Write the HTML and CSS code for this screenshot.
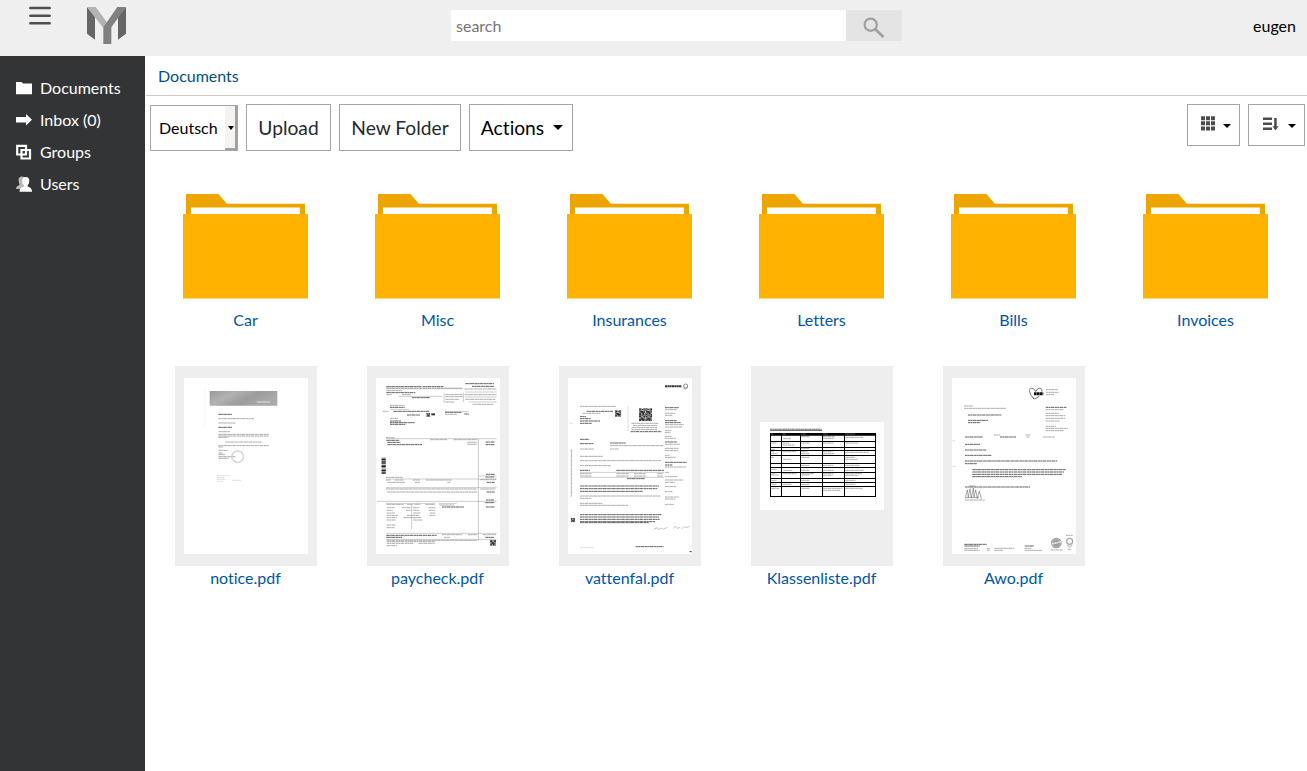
FILE: index.html
```
<!DOCTYPE html>
<html lang="en">
<head>
<meta charset="utf-8">
<title>Documents</title>
<link rel="stylesheet" href="styles.css">
</head>
<body>
<header class="topbar">
  <svg class="menu" width="22" height="20" viewBox="0 0 22 20"><path d="M1.300 2H20.700M1.300 9.700H20.700M1.300 17.300H20.700" stroke="#505050" stroke-width="2.500" stroke-linecap="round"/></svg>
  <svg class="logo" width="39" height="37" viewBox="201 21 117 111">
    <path fill="#666" d="M201 21V101L225 119V50zM318 21V101L294 119V50z"/>
    <path fill="#b3b3b3" d="M201 21H227L262 68L250 84z"/>
    <path fill="#808080" d="M292 21H318L274 82V132H250V82z"/>
  </svg>
  <form class="search">
    <input class="search-input" type="text" placeholder="search">
    <button class="search-btn" type="button"><svg width="22" height="22" viewBox="0 0 22 22" fill="none" stroke="#a0a0a0"><circle cx="7.700" cy="7.700" r="6.100" stroke-width="2.200"/><path d="M12.300 12.300L20.500 20" stroke-width="2.800"/></svg></button>
  </form>
  <span class="user">eugen</span>
</header>
<div class="body">
  <nav class="sidebar">
    <a class="nav-item"><svg class="nav-icon" viewBox="0 0 16 16"><path d="M0 2H5.500L7 3.500H16V14.300H0z"/></svg>Documents</a>
    <a class="nav-item"><svg class="nav-icon" viewBox="0 0 16 16"><path d="M0 5H10V2L16 7.700L10 13.500V10.600H0z"/></svg>Inbox (0)</a>
    <a class="nav-item"><svg class="nav-icon" viewBox="0 0 16 16"><path d="M1.200 1.800H10V10.500H1.200zM5.500 6H14V14.500H5.500z" fill="none" stroke="#fff" stroke-width="2.200"/></svg>Groups</a>
    <a class="nav-item"><svg class="nav-icon" viewBox="0 0 16 16"><path fill="#bbb" d="M2.500 4Q2.500.5 6 .5T9.500 4L8 9V13H0Q0 10 3.500 9Z"/><path d="M6.200 5Q6.200 1 9.800 1T13.300 5Q13.300 8 11.700 9V10.500Q16 11.500 16 15.700H3.500Q3.500 11.500 8 10.500V9Q6.200 8 6.200 5z"/></svg>Users</a>
  </nav>
  <main class="main">
    <div class="breadcrumb"><a>Documents</a></div>
    <div class="toolbar">
      <div class="select"><span class="select-text">Deutsch</span><span class="select-arrow"><i class="caret small"></i></span></div>
      <button class="btn upload">Upload</button>
      <button class="btn folder-btn">New Folder</button>
      <button class="btn actions">Actions<i class="caret"></i></button>
      <div class="views">
        <button class="btn view-grid"><svg width="14" height="15" viewBox="0 0 14 15"><path fill="#4d4d4d" d="M0 .3h4v4H0zM5 .3h4v4H5zM10 .3h4v4h-4zM0 5.300h4v4H0zM5 5.300h4v4H5zM10 5.300h4v4h-4zM0 10.500h4v4H0zM5 10.500h4v4H5zM10 10.500h4v4h-4z"/></svg><i class="caret mid"></i></button>
        <button class="btn view-sort"><svg width="16" height="14" viewBox="0 0 16 14"><path fill="#4d4d4d" d="M0 .4h9v2.500H0zM0 5.400h9v2.500H0zM0 10.600h9v2.500H0zM11.200 1h2.500v8.300H15.500L12.500 13.500L9.500 9.300h1.700z"/></svg><i class="caret mid"></i></button>
      </div>
    </div>
    <svg class="defs" width="0" height="0">
      <symbol id="folder" viewBox="0 0 125 105">
        <path fill="#eda500" d="M3 20V-.3H35L44 9.800H122V20z"/><path fill="#fff" d="M8 13.500H117V20H8z"/><path fill="#ffb300" d="M0 20H125V104.500H0z"/>
      </symbol>
      <symbol id="matrix" viewBox="0 0 12 12"><path fill="#bbb" d="M0 0h12v12H0z"/><path fill="#333" d="M0 0h4v4H0zM8 0h4v4H8zM0 8h4v4H0zM5 1h2v2H5zM5 5h3v2h3v2H9v3H6V9H4V7H1V5h3zM9 5h3v1H9zM10 10h2v2h-2z"/><path fill="#fff" d="M1.200 1.200h1v1h-1zM9.200 1.200h1v1h-1zM1.200 9.200h1v1h-1z"/></symbol>
      <linearGradient id="banner" x2="1" y2=".4"><stop stop-color="#999"/><stop offset=".35" stop-color="#b2b2b2"/><stop offset=".65" stop-color="#9c9c9c"/><stop offset="1" stop-color="#aaa"/></linearGradient>
    </svg>
    <section class="row">
      <a class="tile"><svg class="folder"><use href="#folder"/></svg><span>Car</span></a>
      <a class="tile"><svg class="folder"><use href="#folder"/></svg><span>Misc</span></a>
      <a class="tile"><svg class="folder"><use href="#folder"/></svg><span>Insurances</span></a>
      <a class="tile"><svg class="folder"><use href="#folder"/></svg><span>Letters</span></a>
      <a class="tile"><svg class="folder"><use href="#folder"/></svg><span>Bills</span></a>
      <a class="tile"><svg class="folder"><use href="#folder"/></svg><span>Invoices</span></a>
    </section>
    <section class="row files">
      <a class="tile"><div class="thumb"><svg class="page" viewBox="42 54 372 528">
        <path fill="url(#banner)" d="M119 93H322V137H119z"/><path class="ln" style="stroke:#eee" d="M262 126H300"/>
        <path class="ln" d="M145 163H186M145 202H186"/>
        <path class="ln soft" d="M145 176H252M145 189H196M145 215H180M145 223H297M145 228H297M145 232H175M166 246H277M145 257H297M145 261H160M145 271H174M145 279H160M145 284H165M145 290H196M145 295H176"/>
        <path class="ln faint" d="M140 347H180M140 353H162M140 358H165M140 364H160M187 361H215"/>
        <circle cx="203" cy="290" r="17" fill="none" stroke="#ccc" stroke-width="5" stroke-dasharray="3 1"/><path d="M104 80V200" stroke="#f2f2f2" stroke-width="2"/>
      </svg></div><span>notice.pdf</span></a>
      <a class="tile"><div class="thumb"><svg class="page" viewBox="42 54 372 528">
        <path class="ln" d="M73 80H178M182 80H245M310 71H396M330 79H396M73 98H160M150 113H205M84 142H128M94 154H203M135 165H174M84 183H117M84 188H158M84 193H130M249 157H298M307 162H321M73 241H112M76 247H115M76 254H180M371 246H399M371 254H399M372 343H398M370 351H398M374 367H398M374 396H398M372 420H396M370 428H398M372 441H398M240 441H306M73 526H225M73 532H120M370 532H398"/>
        <path class="ln soft" d="M73 86H302M73 92H120M73 104H90M120 104H148M250 104H302M250 110H302M250 118H292M250 126H278M308 87H404M308 104H404M310 118H400M332 133H394M62 154H80M84 136H128M84 175H108M249 163H285M205 239H255M275 239H346M316 247H346M316 253H346M72 233H98M72 352H122M72 360H85M98 360H126M153 360H174M192 360H268M76 367H128M158 367H174M256 367H266M72 387H345M76 396H345M355 387H400M355 359H402M74 433H125M135 433H152M158 433H175M190 433H220M232 435H277M74 443H98M120 443H148M154 443H172M200 443H220M74 451H92M132 451H148M154 451H172M200 451H220M74 459H98M154 459H175M204 459H220M74 466H108M135 466H172M202 466H220M74 473H105M124 473H178M74 480H102M154 480H182M74 495H100M74 503H98M240 524H300M318 524H347M246 532H264M362 524H402M74 541H345M74 545H220M74 550H155M170 550H218M74 557H105"/>
        <path class="rule" d="M72 84H300M310 96H404M310 111H404M320 126H404M110 109H240M84 148H140M249 155H320M72 236H404M349 236V543M349 348H404M72 357H404M72 383H404M45 424H404M72 430H220M230 430H284M149 430V508M72 520H404M72 538H404M246 98V130M304 98V126"/>
        <path d="M65 293V342" stroke="#222" stroke-width="13" stroke-dasharray="2 1 4 1 1 2"/><use href="#matrix" x="193" y="158" width="12" height="13"/><path d="M208 163H219" stroke="#333" stroke-width="6"/><use href="#matrix" x="384" y="540" width="18" height="17"/>
      </svg></div><span>paycheck.pdf</span></a>
      <a class="tile"><div class="thumb"><svg class="page" viewBox="42 54 372 528">
        <path d="M333 79H383" stroke="#333" stroke-width="6" stroke-dasharray="6 1"/><circle cx="395" cy="78" r="6" fill="none" stroke="#555" stroke-width="2"/><path d="M386 82Q394 93 402 81" fill="none" stroke="#777" stroke-width="2"/>
        <path class="ln" d="M98 154H177M78 170H96M78 176H110M78 183H138M78 190H113M230 215H322M333 143H375M333 182H368M333 188H380M333 246H369M333 307H398M333 315H355M78 238H106M78 251H118M168 249H215M78 331H108M187 331H330M219 356H273M78 378H315M78 386H311M78 394H266"/>
        <path class="ln soft" d="M78 139H185M86 160H140M232 190H314M237 197H310M233 203H309M233 209H309M333 149H368M333 160H364M333 166H355M333 194H390M333 201H385M333 212H352M333 218H350M333 229H353M333 235H366M333 253H378M333 265H375M333 272H372M333 286H347M333 292H365M333 321H396M333 337H345M333 350H370M333 360H388M333 367H363M333 380H366M333 395H355M333 411H376M333 417H364M333 433H361M168 257H327M78 267H120M168 267H195M78 289H146M78 302H321M78 317H171M78 341H112M187 341H225M240 341H275M310 341H327M78 348H112M187 348H225M240 348H275M310 348H327M78 408H319M78 415H110M78 430H145M78 436H222"/>
        <path class="ln" style="stroke:#555" d="M78 464H324M78 471H315M78 478H317M78 485H303M78 488H285M245 560H329"/>
        <path class="ln faint" d="M78 563H120M48 190H57M222 138V215"/><path class="rule" d="M78 337H330M78 352H330"/><path class="ln soft" d="M52 268V410"/>
        <use href="#matrix" x="183" y="151" width="19" height="19"/><use href="#matrix" x="255" y="145" width="20" height="20"/><use href="#matrix" x="274" y="145" width="20" height="20"/><use href="#matrix" x="255" y="164" width="20" height="20"/><use href="#matrix" x="274" y="164" width="20" height="20"/><use href="#matrix" x="50" y="474" width="13" height="13"/><path d="M299 508L310 503L313 509L322 504L326 508L341 502M358 504L366 499L370 505L379 502M384 506L391 499L396 503L407 499" fill="none" stroke="#aaa" stroke-width="2"/><path d="M407 575H413" stroke="#333" stroke-width="3"/>
      </svg></div><span>vattenfal.pdf</span></a>
      <a class="tile"><div class="thumb"><svg class="page wide" viewBox="42 36 372 264">
        <path d="M72 57.500H228" stroke="#777" stroke-width="3" stroke-dasharray="7 1 4 1"/><path d="M72 61H228" stroke="#000" stroke-width="2"/>
        <path d="M72 73H390" stroke="#000" stroke-width="8"/><path d="M75 72H82M108 72H120M165 72H181M231 72H245M297 72H328" stroke="#777" stroke-width="2"/>
        <path d="M73.500 70V260M106.500 70V260M163.500 70V260M229.500 70V260M295.500 70V260M388.500 70V260M72 94.500H390M72 112.500H390M72 121.500H390M72 136.500H390M72 160.500H390M72 172.500H390M72 187.500H390M72 205.500H390M72 217.500H390M72 229.500H390M72 259.500H390" stroke="#000" stroke-width="3" fill="none" shape-rendering="crispEdges"/>
        <path class="ln soft" d="M112 86H134M166 80H190M231 80H266M231 85H263M298 82H352M76 99H92M110 99H130M110 105H145M166 99H190M231 99H263M298 99H337M76 118H87M166 115H190M76 125H84M76 131H95M110 125H150M166 125H185M166 131H190M231 125H260M231 131H264M298 127H369M76 142H85M112 148H134M166 142H190M298 142H328M298 148H335M166 166H190M231 166H262M298 166H341M76 178H92M112 181H140M166 181H190M231 181H262M298 181H354M76 190H88M76 195H98M110 191H154M166 191H204M231 191H262M298 191H348M166 195H190M231 196H260M298 196H338M76 211H92M166 211H190M298 211H329M76 223H92M110 223H138M166 223H190M298 223H329M76 235H99M166 235H190M231 235H289M231 241H283M298 235H350"/>
      </svg></div><span>Klassenliste.pdf</span></a>
      <a class="tile"><div class="thumb"><svg class="page" viewBox="42 54 372 528">
        <path d="M288 117Q274 103 274 92Q276 82 285 86Q291 88 293 95Q298 84 306 84Q314 87 312 95M284 112Q290 118 291 117L304 109" fill="none" stroke="#333" stroke-width="2"/><path d="M288 101H316" stroke="#111" stroke-width="9" stroke-dasharray="8 1"/>
        <path class="ln" d="M90 165H190M90 181H150M90 188H127M323 142H386M81 231H135M186 231H234M81 253H126M81 270H145M81 286H160M81 303H358M81 311H117M103 329H384M103 336H378M103 343H372M103 350H252M81 381H276M79 553H146M79 558H125M261 558H287"/>
        <path class="ln soft" d="M324 89H360M324 97H362M324 104H348M78 138H106M78 145H204M323 149H378M323 160H362M323 167H382M323 175H382M323 183H366M323 199H354M323 205H390M323 212H378M168 225H187M262 225H278M266 231H275M315 231H350M81 420H140M79 566H120M147 566H157M169 565H228M261 565H280M79 571H125M147 571H154M169 571H195M261 571H312M338 570H375M384 526H404M389 568H400"/>
        <path d="M82 414L88 390L91 412L96 386L100 414L106 384L108 412L113 390L118 415L124 393L130 417M83 413H123M93 378H112" fill="none" stroke="#555" stroke-width="1.500"/>
        <path class="ln faint" d="M43 242H52M43 319H54"/><circle cx="355" cy="549" r="16" fill="#999"/><circle cx="355" cy="549" r="12" fill="none" stroke="#ccc" stroke-width="2"/><path d="M341 552L370 545" stroke="#eee" stroke-width="5" stroke-dasharray="4 1"/><circle cx="395" cy="544" r="9" fill="none" stroke="#aaa" stroke-width="4"/><path d="M387 554L395 564L404 554M388 558H402" fill="none" stroke="#aaa" stroke-width="2"/>
      </svg></div><span>Awo.pdf</span></a>
    </section>
  </main>
</div>
</body>
</html>
```
FILE: styles.css
```
* { box-sizing: border-box; }
body { margin: 0; height: 771px; display: flex; flex-direction: column; overflow: hidden; background: #fff; color: #000; font: 16px/24px Lato, sans-serif; font-variant-ligatures: none; }
svg { display: block; flex: none; }
button, input { font-family: inherit; font-variant-ligatures: none; }
.topbar { height: 56px; flex: none; display: flex; align-items: flex-start; background: #efefef; }
.menu { margin: 6px 0 0 29px; }
.logo { margin: 7px 0 0 36px; }
.search { display: flex; margin: 10px 0 0 325px; }
.search-input { width: 395px; height: 31px; border: 0; padding: 0 5px 1px; background: #fff; font-size: 16px; }
.search-input::placeholder { color: #757575; opacity: 1; }
.search-btn { width: 56px; height: 31px; border: 0; padding: 5px 0 0 17px; background: #e4e4e4; }
.user { margin: 14px 11px 0 auto; }
.body { flex: 1; display: flex; min-height: 0; }
.sidebar { width: 145px; flex: none; padding-top: 16px; background: #333436; }
.nav-item { display: flex; align-items: center; height: 32px; padding-left: 16px; gap: 8px; color: #fff; }
.nav-icon { width: 16px; height: 16px; fill: #fff; }
.main { flex: 1; min-width: 0; }
.breadcrumb { height: 40px; margin-left: 1px; padding: 8px 12px 0; border-bottom: 1px solid #ccc; color: #00507f; }
.toolbar { display: flex; gap: 8px; height: 55px; align-items: flex-start; padding: 8px 2px 0 5px; }
.select { display: flex; width: 88px; height: 46px; margin-top: 1px; border: 1px solid #a5a5a5; }
.select-text { width: 74px; padding: 10px 0 0 8px; }
.select-arrow { width: 12px; height: 44px; border: solid #a0a0a0; border-width: 0 2px 2px 0; background: #f4f3f1; padding: 20px 0 0 3px; }
.btn { height: 47px; border: 1px solid #a5a5a5; padding: 0; background: #fff; font-size: 19.2px; line-height: 28px; color: #24292e; display: flex; align-items: center; justify-content: center; }
.upload { width: 85px; }
.folder-btn { width: 122px; }
.actions { width: 104px; gap: 9px; padding-left: 2px; color: #000; }
.caret { display: block; border: solid transparent; border-width: 5px 5px 0; border-top-color: #000; }
.caret.small { width: 0; height: 0; border-width: 4px 3px 0; border-top-color: #000; }
.caret.mid { border-width: 4px 4px 0; margin-top: 1px; }
.views { display: flex; gap: 8px; margin-left: auto; }
.views .btn { height: 42px; }
.views svg { margin-top: -3px; }
.view-grid.btn { width: 53px; gap: 8px; padding-left: 4px; }
.view-sort.btn { width: 57px; gap: 9px; padding-left: 6px; }
.defs { position: absolute; }
.row { display: flex; padding: 43px 0 0 5px; }
.tile { width: 192px; display: flex; flex-direction: column; align-items: center; color: #0056a8; }
.folder { width: 125px; height: 105px; margin: 0 1px 9px 0; overflow: visible; }
.tile span { margin-right: 1px; }
.files { padding-top: 34px; }
.thumb { width: 142px; height: 200px; display: flex; align-items: center; justify-content: center; background: #eee; }
.page { width: 124px; height: 176px; background: #fff; }
.page.wide { height: 88px; }
.ln { fill: none; stroke: #555; stroke-width: 2.8; stroke-dasharray: 8 .7 5 1 11 1.5; }
.ln.soft { stroke: #959595; stroke-width: 2.4; }
.ln.faint { stroke: #ccc; stroke-width: 2; }
.rule { fill: none; stroke: #999; stroke-width: 1.5; }
```
